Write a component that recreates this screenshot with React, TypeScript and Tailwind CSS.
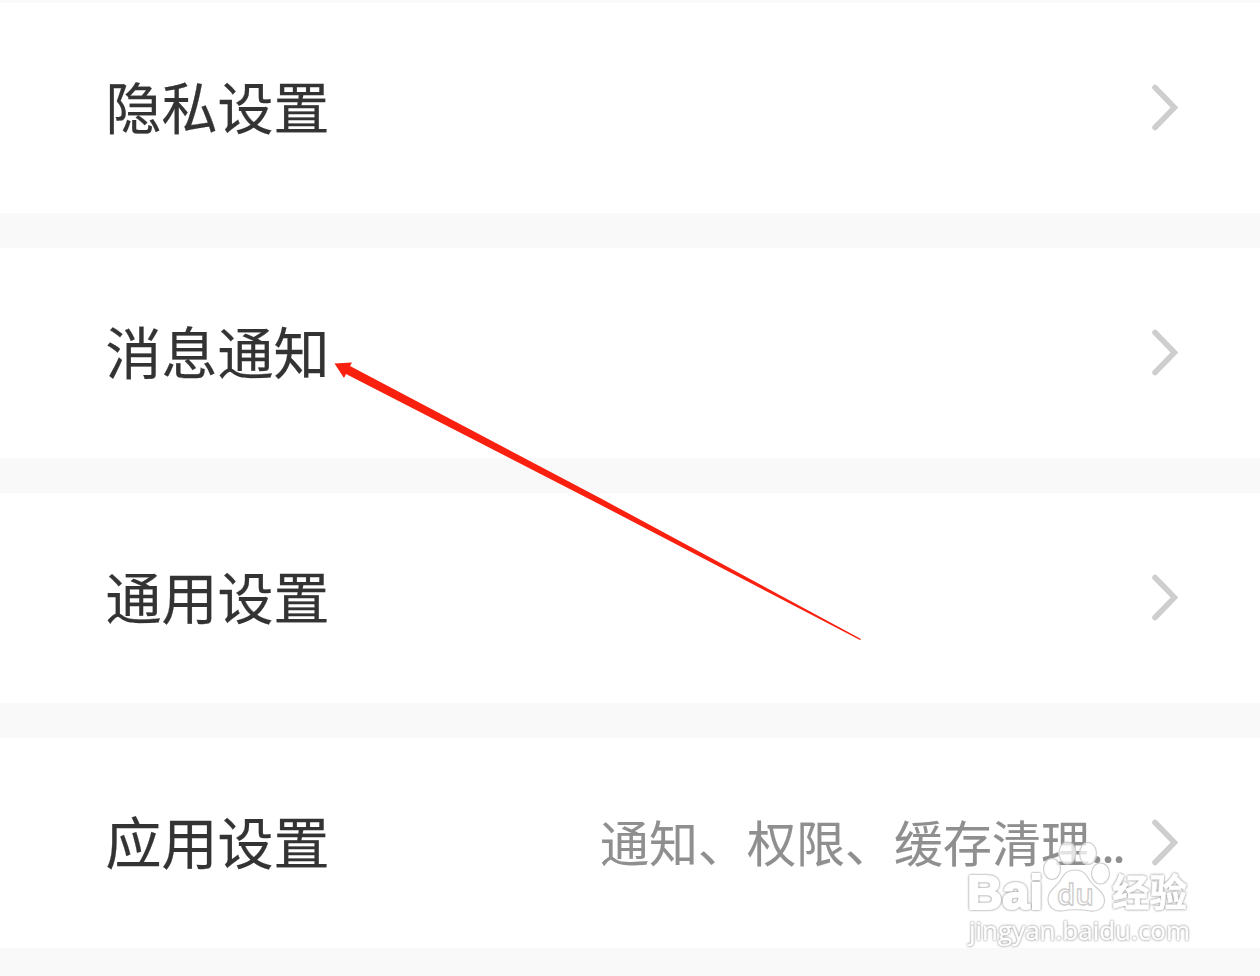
import React from 'react';

type Setting = {
  title: string;
  value?: string;
};

const settings: Setting[] = [
  { title: '隐私设置' },
  { title: '消息通知' },
  { title: '通用设置' },
  { title: '应用设置', value: '通知、权限、缓存清理' },
];

function Chevron() {
  return (
    <svg className="h-[50px] w-8 shrink-0" viewBox="0 0 32 50" fill="none">
      <path d="M7 4.500 L26.500 24.500 L7 44.500" stroke="#cecece" strokeWidth="5.500" strokeLinecap="round" />
    </svg>
  );
}

function SettingRow({ title, value }: Setting) {
  return (
    <div className="flex h-[210px] shrink-0 items-center bg-white pr-[80px] pl-[105.5px]">
      <span className="pb-[6px] text-[56px] leading-[80px] whitespace-nowrap text-[#333333] [-webkit-text-stroke:0.25px_#333333]">
        {title}
      </span>
      <div className="ml-auto flex items-center">
        {value && (
          <span className="mr-[24.5px] flex pb-[5px] text-[49px] leading-[70px] whitespace-nowrap text-[#8f8f8f] [-webkit-text-stroke:0.15px_#8f8f8f]">
            <span>{value}</span>
            <span className="tracking-[-2.500px]">...</span>
          </span>
        )}
        <Chevron />
      </div>
    </div>
  );
}

function Arrow() {
  return (
    <svg className="pointer-events-none absolute top-0 left-0 h-[976px] w-[1260px]" viewBox="0 0 1260 976">
      <path d="M334.5 363.5 L352 362.5 L350 366 L600 498 L861 639 L860 640 L597 503 L346 374 L344 378 Z" fill="#f9200f" />
    </svg>
  );
}

function Watermark() {
  return (
    <svg
      className="pointer-events-none absolute top-[836px] left-[960px] h-[116px] w-[240px]"
      viewBox="960 836 240 116"
      fill="#ffffff"
      stroke="#cfcfcf"
      strokeWidth="1.2"
    >
      <g fillOpacity="0.75">
        <ellipse cx="1052" cy="869" rx="8.5" ry="10.5" />
        <ellipse cx="1067.5" cy="853" rx="8.5" ry="11" />
        <ellipse cx="1088" cy="853.5" rx="8.5" ry="11" />
        <ellipse cx="1100.5" cy="873.5" rx="9" ry="10.5" />
      </g>
      <path d="M1075 870 C1083 870 1086 874 1090 881 C1095 888 1104 891 1104.500 900 C1104.500 908 1098 912 1090 911 C1081 909.500 1070 909.500 1062 911 C1054 912 1048 907 1048 899 C1048 891 1055 888 1060 881 C1064 874 1067 870 1075 870 Z" />
      {/* lettering is thickened with a white stroke, the shadow gives it its outline */}
      <g stroke="#ffffff" strokeLinejoin="round" className="[filter:drop-shadow(0_0_0.8px_#777777)]">
        <text x="967" y="909" fontSize="49" strokeWidth="2.2" textLength="76" lengthAdjust="spacingAndGlyphs" className="font-['Liberation_Sans',sans-serif] font-bold">Bai</text>
        <text x="1112" y="906" fontSize="38" strokeWidth="0.8" textLength="75" lengthAdjust="spacingAndGlyphs" className="font-['Noto_Sans_CJK_SC',sans-serif] font-bold">经验</text>
        <text x="969" y="940" fontSize="25" strokeWidth="0.4" textLength="221" lengthAdjust="spacingAndGlyphs" className="font-['Open_Sans',sans-serif]">jingyan.baidu.com</text>
      </g>
      <text x="1057" y="905" fontSize="29" stroke="#cccccc" strokeWidth="1.3" textLength="37" lengthAdjust="spacingAndGlyphs" className="font-['Open_Sans',sans-serif] font-semibold">du</text>
    </svg>
  );
}

export default function App() {
  return (
    <div className="relative flex h-[976px] w-[1260px] flex-col gap-[35px] overflow-hidden bg-[#f9f9f9] pt-[3px] font-['Noto_Sans_CJK_SC',sans-serif]">
      {settings.map(setting => (
        <SettingRow key={setting.title} {...setting} />
      ))}
      <Arrow />
      <Watermark />
    </div>
  );
}
